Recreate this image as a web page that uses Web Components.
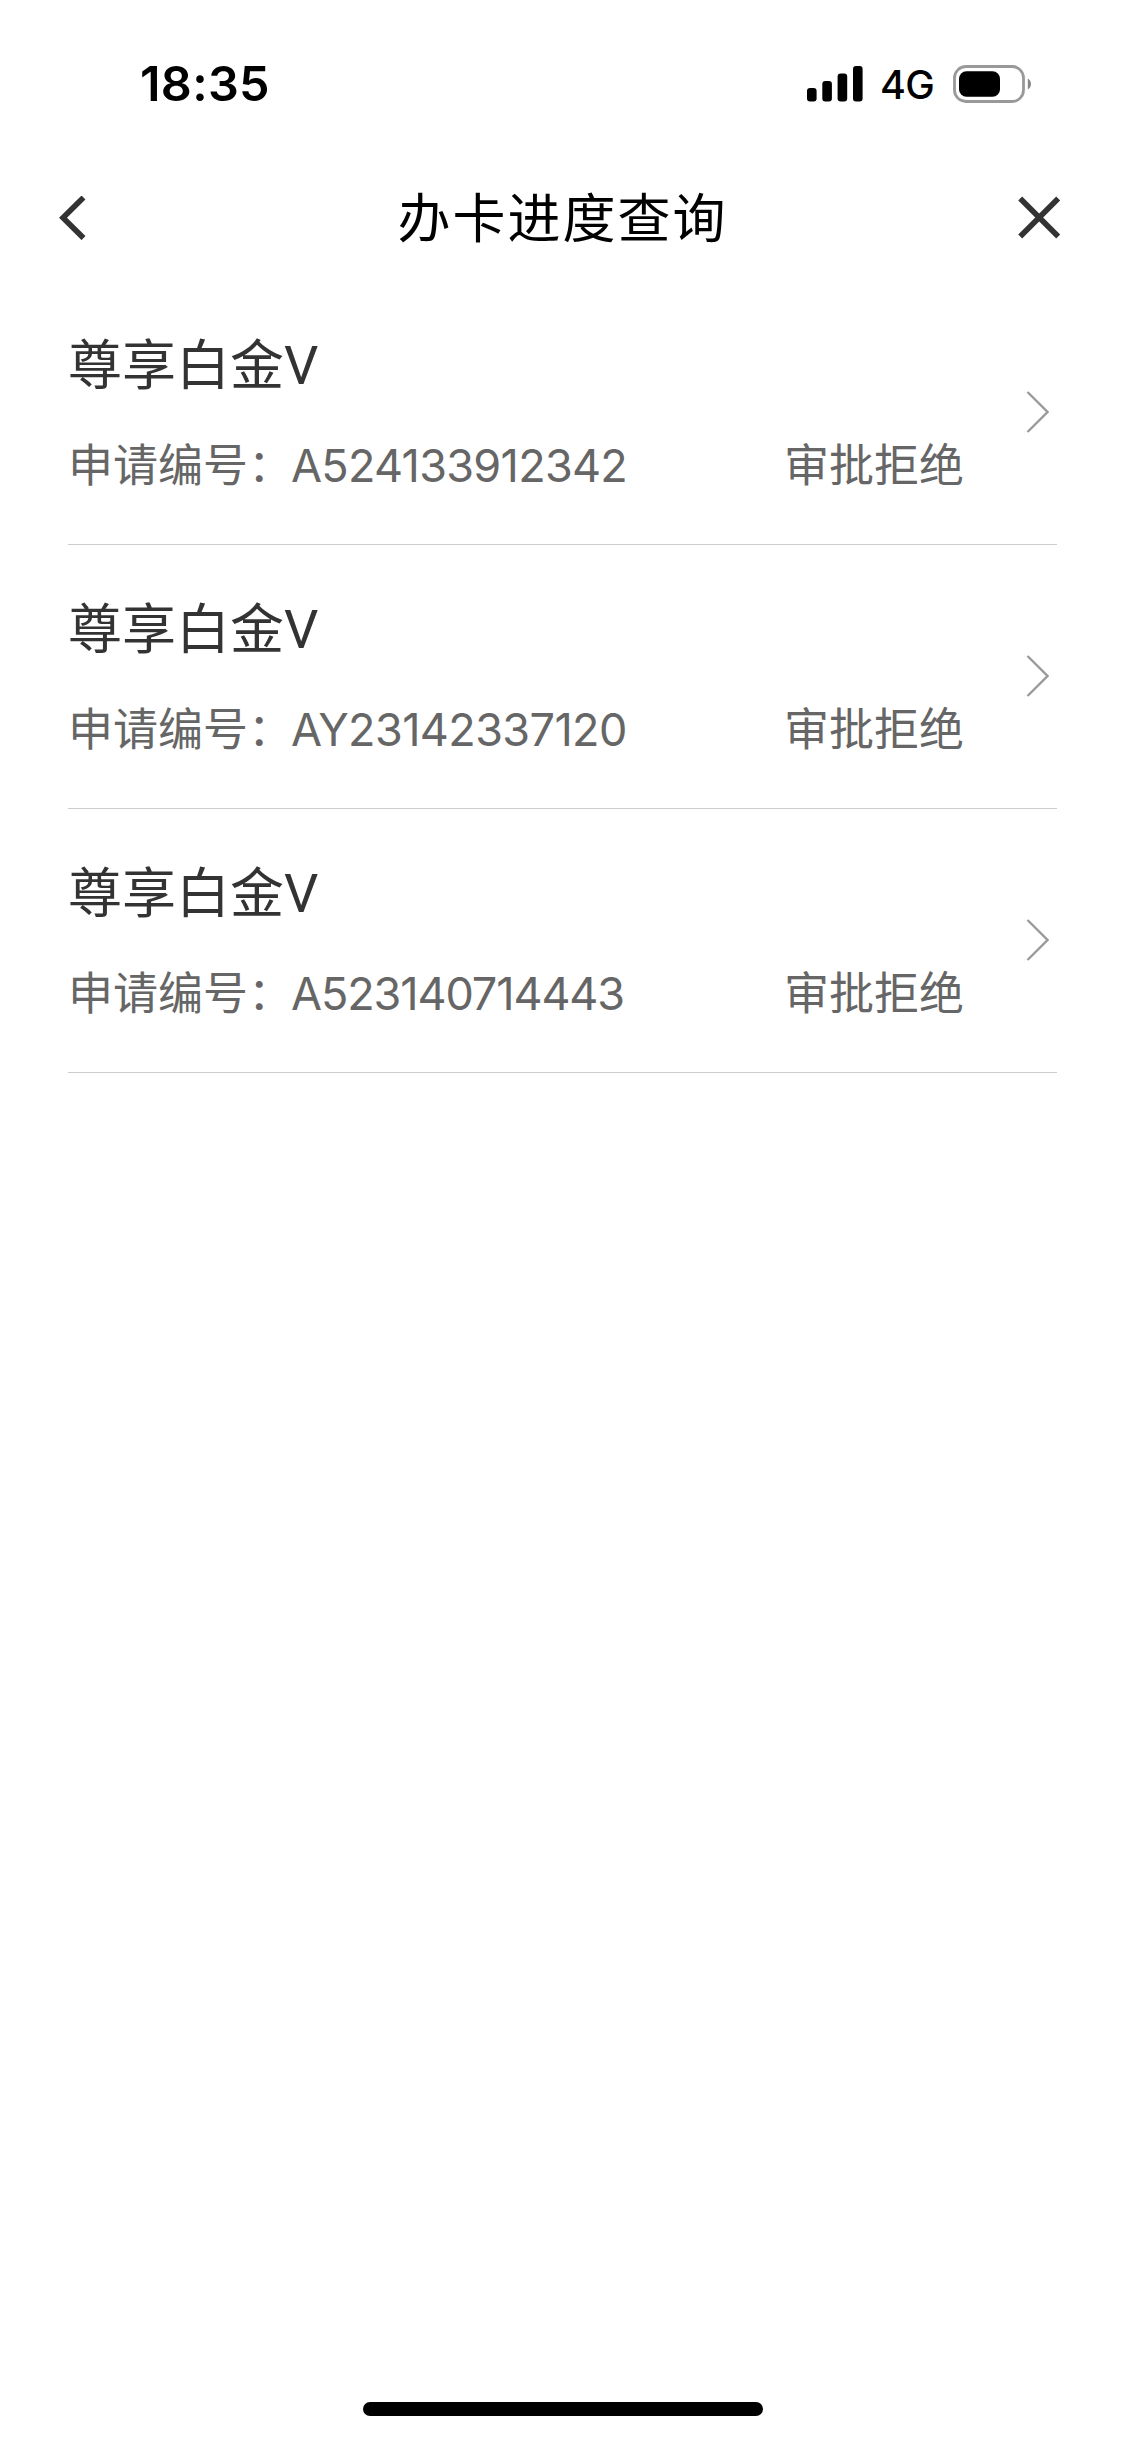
<!DOCTYPE html>
<html lang="zh-CN">
<head>
  <meta charset="utf-8">
  <meta name="viewport" content="width=device-width, initial-scale=1">
  <title>办卡进度查询</title>
  <style>
    body {
      margin: 0;
      background: #fff;
      font-family: Inter, "Noto Sans CJK SC", sans-serif;
    }
  </style>
</head>
<body>
  <progress-app></progress-app>

  <script>
    class StatusBar extends HTMLElement {
      constructor () {
        super()
        this.attachShadow({ mode: 'open' })
        this.shadowRoot.innerHTML = `
          <style>
            :host {
              display: flex;
              align-items: center;
              box-sizing: border-box;
              height: 168px;
              padding: 0 94px 0 140px;
              color: #000;
            }
            .time {
              font-size: 48.5px;
              font-weight: 600;
              letter-spacing: 0.3px;
              line-height: 60px;
            }
            .right {
              display: flex;
              align-items: center;
              margin-left: auto;
            }
            .network {
              margin: 1px 19px 0 17px;
              font-size: 39.5px;
              font-weight: 500;
              line-height: 48px;
              letter-spacing: -0.7px;
            }
            svg { display: block; }
          </style>
          <span class="time"><slot></slot></span>
          <div class="right">
            <svg width="56" height="36" viewBox="0 0 56 36">
              <rect x="0" y="22" width="9.6" height="13.5" rx="3"/>
              <rect x="15.3" y="15" width="9.6" height="20.5" rx="3"/>
              <rect x="30.6" y="7.5" width="9.6" height="28" rx="3"/>
              <rect x="46" y="0" width="9.6" height="35.5" rx="3"/>
            </svg>
            <span class="network">4G</span>
            <svg width="78" height="38" viewBox="0 0 78 38">
              <rect x="1.5" y="1.5" width="69" height="35" rx="11.5" fill="none" stroke="#999" stroke-width="2.8"/>
              <rect x="6" y="6.3" width="41" height="25.4" rx="7.5"/>
              <path d="M74.8 13.5c2 1 3.2 3 3.2 5.500s-1.200 4.500-3.200 5.500z" fill="#888"/>
            </svg>
          </div>`
      }
    }

    class NavBar extends HTMLElement {
      constructor () {
        super()
        this.attachShadow({ mode: 'open' })
        this.shadowRoot.innerHTML = `
          <style>
            :host {
              display: grid;
              grid-template-columns: 1fr auto 1fr;
              align-items: center;
              height: 100px;
              padding: 0 63px 0 57px;
            }
            h1 {
              margin: 0;
              padding: 2px 0 0 6px;
              color: #000;
              font-size: 53px;
              font-weight: 400;
              line-height: 80px;
              letter-spacing: 2px;
            }
            svg {
              display: block;
              fill: none;
              stroke: #333;
              stroke-width: 5.6;
            }
            .close { justify-self: end; }
          </style>
          <svg class="back" width="30" height="44" viewBox="0 0 30 44"><path d="M26.500 1.500L6 21.700l20.500 20.400"/></svg>
          <h1><slot></slot></h1>
          <svg class="close" width="44" height="44" viewBox="0 0 44 44"><path d="M2.200 2.500l38 38M40.200 2.500l-38 38"/></svg>`
      }
    }

    class ApplyItem extends HTMLElement {
      constructor () {
        super()
        this.attachShadow({ mode: 'open' })
      }

      set apply (apply) {
        this._apply = apply
        this.render()
      }

      render () {
        this.shadowRoot.innerHTML = `
          <style>
            :host {
              display: flex;
              align-items: center;
              box-sizing: border-box;
              height: 264px;
              border-bottom: 1px solid #ccc;
            }
            .info {
              width: 896px;
              padding-top: 2px;
            }
            h2 {
              margin: 0;
              color: #333;
              font-size: 54px;
              font-weight: 400;
              line-height: 80px;
            }
            .latin {
              font-family: Roboto, sans-serif;
              line-height: 1;
              vertical-align: 1px;
            }
            .detail {
              display: flex;
              justify-content: space-between;
              margin-top: 24px;
              color: #666;
              font-size: 45px;
              line-height: 72px;
            }
            .number {
              margin-left: -2px;
              letter-spacing: ${this._apply.spacing}px;
            }
            svg {
              display: block;
              margin: 0 0 1px auto;
              padding-right: 8px;
              fill: none;
              stroke: #999;
              stroke-width: 2.300;
            }
          </style>
          <div class="info">
            <h2>${this._apply.name}<span class="latin">${this._apply.grade}</span></h2>
            <div class="detail">
              <span>申请编号：<span class="number">${this._apply.number}</span></span>
              <span>${this._apply.status}</span>
            </div>
          </div>
          <svg width="23" height="42" viewBox="0 0 23 42"><path d="M1.500 1l20 20-20 20"/></svg>`
      }
    }

    class HomeIndicator extends HTMLElement {
      constructor () {
        super()
        this.attachShadow({ mode: 'open' })
        this.shadowRoot.innerHTML = `
          <style>
            :host {
              display: block;
              width: 400px;
              height: 14px;
              margin: auto auto 23px;
              border-radius: 7px;
              background: #000;
            }
          </style>`
      }
    }

    class ProgressApp extends HTMLElement {
      constructor () {
        super()
        this.attachShadow({ mode: 'open' })
        this.shadowRoot.innerHTML = `
          <style>
            :host {
              display: flex;
              flex-direction: column;
              height: 2439px;
            }
            main { padding: 13px 68px 0; }
          </style>
          <status-bar>18:35</status-bar>
          <nav-bar>办卡进度查询</nav-bar>
          <main></main>
          <home-indicator></home-indicator>`

        const list = [
          { name: '尊享白金', grade: 'V', number: 'A524133912342', status: '审批拒绝', spacing: -0.7 },
          { name: '尊享白金', grade: 'V', number: 'AY23142337120', status: '审批拒绝', spacing: -0.6 },
          { name: '尊享白金', grade: 'V', number: 'A523140714443', status: '审批拒绝', spacing: -1.1 }
        ]
        const main = this.shadowRoot.querySelector('main')
        list.forEach(apply => {
          const item = document.createElement('apply-item')
          item.apply = apply
          main.appendChild(item)
        })
      }
    }

    customElements.define('status-bar', StatusBar)
    customElements.define('nav-bar', NavBar)
    customElements.define('apply-item', ApplyItem)
    customElements.define('home-indicator', HomeIndicator)
    customElements.define('progress-app', ProgressApp)
  </script>
</body>
</html>
